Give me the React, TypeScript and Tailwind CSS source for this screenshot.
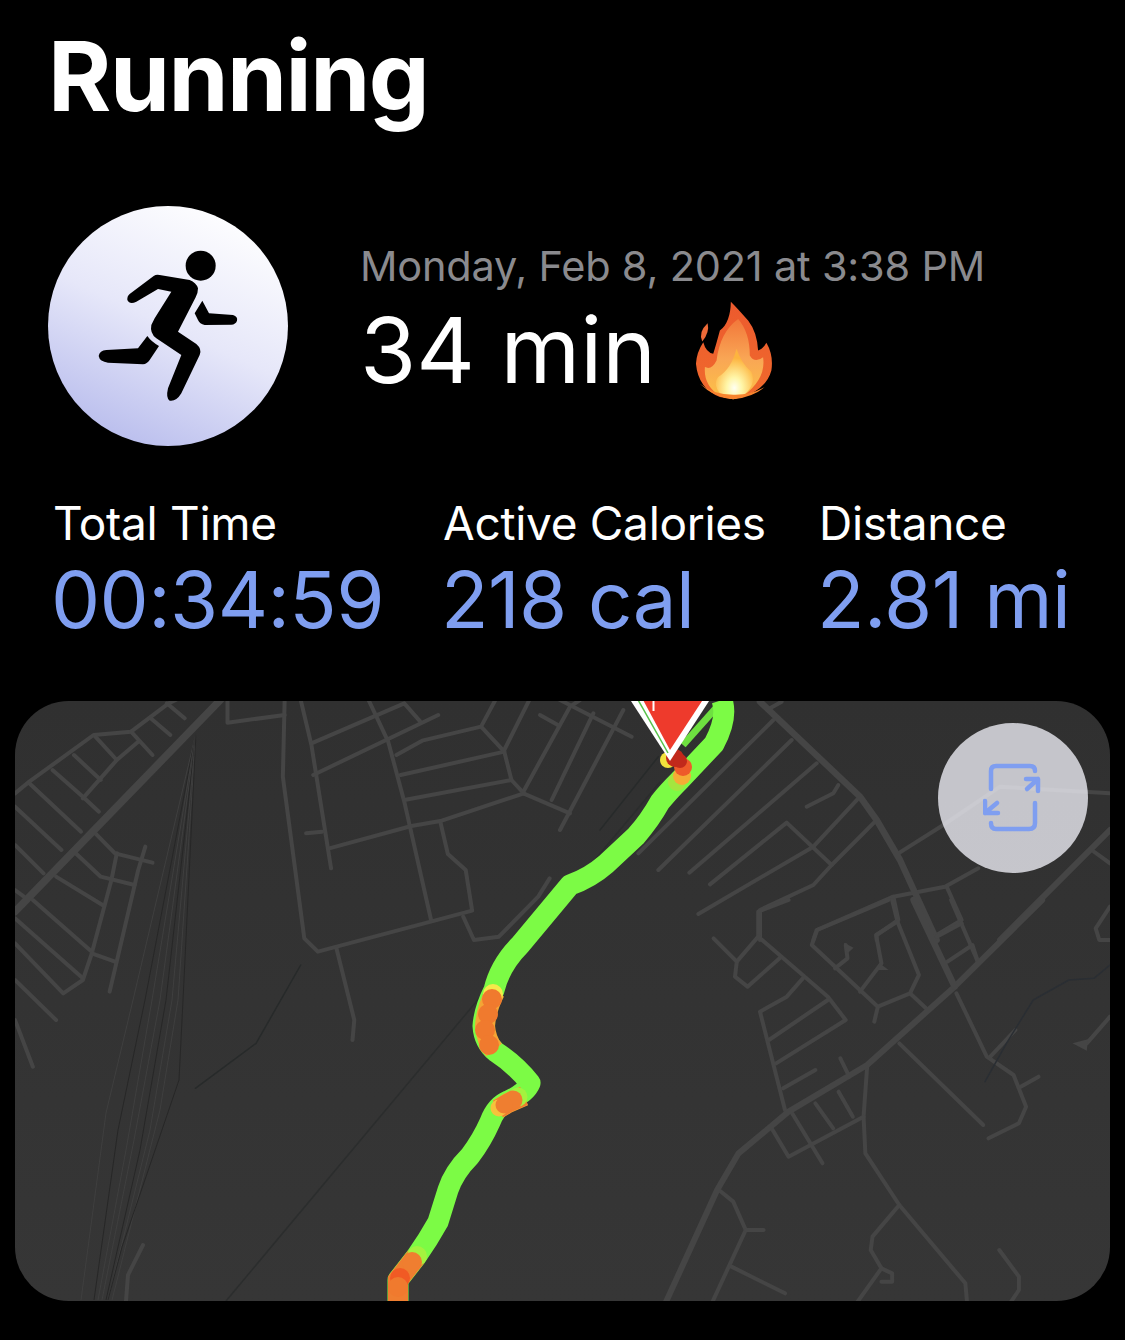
const FONT = "font-['Inter','Liberation_Sans',sans-serif]";

// road polylines, in the coordinates of the map crops
const westThin = [
  "0,280 40,245 220,105 325,95 430,10 450,0",
  "325,95 385,165",
  "425,10 475,55",
  "380,55 435,105",
  "225,110 285,180",
  "165,165 240,240",
  "105,210 190,290 235,335",
  "40,250 185,395",
  "0,320 130,450",
  "0,435 80,520",
  "190,295 285,180 345,125",
  "225,400 280,460 385,488",
  "365,440 345,510 265,875",
  "285,460 270,540 215,760 190,840 135,880 0,730",
  "170,460 240,530 335,555",
  "115,530 245,615",
  "50,600 215,755",
  "0,655 190,835",
  "215,760 280,785",
  "0,570 25,590",
  "0,840 115,960 ",
  "595,0 595,68 755,45",
  "755,0 750,230 810,715 848,755 1280,632 1262,510 1212,462 1192,370",
  "800,0 830,135 885,505",
  "815,400 860,395",
  "880,445 1110,378 1195,362 1425,280",
  "830,130 1090,10 1135,65",
  "835,225 1185,45",
  "990,0 1045,125 1090,305 1165,660",
  "1068,165 1140,122 1305,80 1345,0",
  "1080,225 1370,155",
  "1090,300 1390,240",
  "1305,80 1370,155 1390,240 1425,280",
  "1370,150 1440,0",
  "1470,45 1520,75",
  "1255,650 1285,720 1355,710 1465,590 1497,535",
  "900,745 950,960 945,1020 ",
  "0,960 50,1100",
];

// the blocks just left of the pin
const northCentreThin = [
  "270,20 130,275",
  "340,40 215,300",
  "430,30 240,390",
  "240,0 455,110",
  "130,280 270,340",
  "300,0 270,20",
];

const northEastThin = [
  "520,90 115,490",
  "575,150 175,540",
  "650,220 268,548",
  "715,285 700,310 620,350",
  "775,325 640,470 295,672",
  "825,395 695,525 640,585 480,660 480,750",
  "330,583 560,398 695,525",
  "895,490 1030,405 1200,290 1530,310",
  "1135,535 1035,590 880,620 650,720 640,750",
  "880,620 895,690 830,735 830,750",
  "1040,590 1085,690 1010,735",
  "1475,480 1530,520",
  "545,35 510,55",
];

const southEastThin = [
  "930,0 945,65 885,105 900,190 840,275",
  "920,0 720,90 705,135 890,320 980,280 1005,225 945,65",
  "800,135 805,175 770,205",
  "880,365 890,320",
  "980,280 1030,330",
  "1095,0 1170,185",
  "1055,110 1125,70",
  "1085,185 1155,135 1170,185",
  "640,0 555,35 555,110 495,185 490,230 525,260 615,175",
  "555,110 750,290 800,360 605,490",
  "430,115 495,185",
  "680,235 635,290 560,335 630,630",
  "750,300 585,420",
  "715,510 625,565",
  "785,475 810,530",
  "590,680 640,770 850,650 860,500",
  "650,640 735,790",
  "715,610 765,685",
  "780,575 820,650",
  "850,650 855,760 950,915 1135,1150 1140,1210",
  "950,915 875,1010 870,1050 900,1105 830,1210",
  "900,1105 930,1120 930,1145 900,1145",
  "445,870 485,905 520,990 425,1210",
  "520,990 570,990",
  "480,1100 630,1180",
  "950,430 1185,675",
  "1110,280 1195,470 1270,525 1305,620 1285,670 1200,715",
  "1205,470 1275,390",
  "1290,560 1340,530",
  "1230,1050 1285,1130 1285,1170 1260,1210",
  "1540,350 1475,430",
  "1540,20 1500,85 1510,120 1540,120",
];

const railLines = [
  "196,733 133,1000 106,1113 81,1300",
  "196,733 145,1000 118,1130 94,1300",
  "196,733 152,1000 126,1150 98,1300",
  "196,733 160,1000 134,1140 102,1300",
  "196,733 166,1000 140,1150 106,1300",
  "196,733 172,1000 150,1130 108,1300",
  "196,733 178,1000 160,1110 112,1300",
  "196,733 183,1000 179,1080 122,1247 108,1300",
];

function Road({ points, width, color = "#454545" }: { points: string; width: number; color?: string }) {
  return (
    <polyline
      points={points}
      fill="none"
      stroke={color}
      strokeWidth={width}
      strokeLinecap="round"
      strokeLinejoin="round"
      vectorEffect="non-scaling-stroke"
    />
  );
}

// orange stretches, drawn over the green with the same width
const routeBands = [
  "M495 992 Q486 1010 485 1026 Q486 1040 494 1050",
  "M524 1096 L508 1103 L498 1109",
  "M416 1257 L398 1280 L398 1301",
];

const routeDots: [number, number, string, number][] = [
  [493, 994, "#f5e94a", 10],
  [492, 999, "#f07a2e", 10],
  [488, 1014, "#f07a2e", 10],
  [485, 1030, "#f07a2e", 10],
  [489, 1045, "#f07a2e", 10],
  [518, 1097, "#a4f23f", 9.5],
  [513, 1100, "#ef7e30", 9.5],
  [499, 1108, "#f6c23c", 8.5],
  [504, 1105, "#ef7e30", 8.5],
  [417, 1256, "#a4f23f", 10],
  [412, 1262, "#ef7e30", 10],
  [400, 1278, "#f15a24", 10],
  [398, 1287, "#f07a2e", 10],
];

function MapDrawing() {
  return (
    <svg viewBox="15 701 1095 600" className="block w-full h-full">
      <g transform="translate(15 700) scale(0.35714 0.33333)">
        {westThin.map((p) => (
          <Road key={p} points={p} width={4} />
        ))}
        <Road points="575,0 0,635" width={7.5} />
        <Road points="800,795 675,1030 505,1165" width={1.5} color="#272a2a" />
      </g>
      <g transform="translate(480 700) scale(0.33333)">
        {northCentreThin.map((p) => (
          <Road key={p} points={p} width={4} />
        ))}
        <Road points="535,170 360,390" width={1.5} color="#272a2a" />
      </g>
      <g transform="translate(600 690) scale(0.33333)">
        {northEastThin.map((p) => (
          <Road key={p} points={p} width={4} />
        ))}
        <Road points="480,35 780,320 830,390 900,510 1010,750" width={6.5} />
        <Road points="1530,420 1200,750" width={6} />
      </g>
      <g transform="translate(560 900) scale(0.35714 0.33333)">
        {southEastThin.map((p) => (
          <Road key={p} points={p} width={4} />
        ))}
        <Road points="1350,0 1105,260 860,495 640,635 500,760 440,870 295,1210" width={6} />
        <Road points="990,0 1105,260" width={6.5} />
        <Road points="1190,545 1250,430 1325,300 1425,240 1495,235 1540,195" width={1.5} color="#2a2e33" />
        <polygon points="795,128 822,143 803,162" fill="#454545" />
        <polygon points="895,190 920,210 890,210" fill="#454545" />
        <polygon points="1435,430 1478,418 1475,452" fill="#454545" />
      </g>
      {railLines.map((p, i) => (
        <polyline key={p} points={p} fill="none" strokeWidth="1" stroke={i % 3 === 1 ? "#272727" : "#3f3f3f"} />
      ))}
      <polyline points="143,1245 128,1275 126,1301" fill="none" stroke="#454545" strokeWidth="4" strokeLinecap="round" />
      <polyline points="660,782 226,1301" fill="none" stroke="#2b2d2d" strokeWidth="1.5" />

      {/* route */}
      <polyline points="716,708 683,745" fill="none" stroke="#6ee040" strokeWidth="7" />
      <path
        d="M722 700 Q728 718 714 744 L680 780 Q668 792 660 802 Q650 820 636 836 L606 864 Q590 878 570 885 L520 945 Q500 965 494 990 Q484 1010 483 1026 Q484 1042 496 1052 Q516 1065 530 1083 Q526 1093 508 1101 Q496 1106 490 1122 Q482 1140 470 1156 Q454 1172 448 1190 L438 1222 Q428 1240 416 1257 L398 1280 L398 1301"
        fill="none"
        stroke="#7cfb45"
        strokeWidth="21"
        strokeLinejoin="round"
      />
      {routeBands.map((d) => (
        <path key={d} d={d} fill="none" stroke="#f4a535" strokeWidth="20" strokeLinejoin="round" />
      ))}
      <path d="M524 1096 L508 1103 L498 1109" fill="none" stroke="#ef7e30" strokeWidth="19" />
      <path d="M416 1257 L398 1280 L398 1301" fill="none" stroke="#ef7e30" strokeWidth="20" />
      {routeDots.map(([x, y, c, r]) => (
        <circle key={`${x}-${y}`} cx={x} cy={y} r={r} fill={c} />
      ))}

      {/* start dots and pin */}
      <circle cx="677" cy="782" r="9" fill="#a4e63f" />
      <circle cx="682" cy="776" r="9" fill="#f5ac35" />
      <circle cx="683" cy="767" r="9" fill="#ee5a2a" />
      <circle cx="668" cy="760" r="8" fill="#f2e23c" />
      <circle cx="675" cy="758" r="9" fill="#c1291b" />
      <circle cx="680" cy="761" r="7" fill="#c1291b" />
      <polygon points="629,698 711,698 670,761" fill="#ffffff" />
      <polygon points="635,698 705,698 670,754" fill="#ffffff" />
      <polyline points="637,698 668,753" fill="none" stroke="#57c24a" strokeWidth="1.5" />
      <polygon points="642,698 704,698 670,750" fill="#ee3a2c" />
      <rect x="652.5" y="701" width="2" height="10" fill="#ffffff" />
    </svg>
  );
}

function RunnerBadge() {
  return (
    <div className="w-[240px] h-[240px] rounded-full shrink-0 bg-[linear-gradient(205deg,#ffffff_8%,#e6e7f9_50%,#aeb3ea_100%)]">
      <svg viewBox="55 48 720 720" className="block w-full h-full">
        <circle cx="513" cy="227" r="45" fill="#000" />
        <path
          d="M300 312 L372 258 Q380 252 390 255 L480 270 Q500 278 505 295 Q505 310 498 322 L445 425 L500 462 Q518 478 510 495 L455 610 Q440 635 420 632 Q408 625 415 595 L455 495 L380 445 Q360 430 365 405 L375 385 L425 305 L385 297 L320 335 Q300 345 293 330 Q292 318 300 312 Z"
          fill="#000"
        />
        <path
          d="M518 332 L538 370 L610 375 Q625 380 622 392 Q618 403 605 404 L525 405 Q510 402 505 390 L495 370 Z"
          fill="#000"
        />
        <path
          d="M353 438 Q365 455 388 468 L360 510 Q352 522 340 523 L235 518 Q210 515 207 498 Q210 482 230 480 L325 475 Z"
          fill="#000"
        />
      </svg>
    </div>
  );
}

function Flame() {
  return (
    <svg viewBox="70 30 245 310" className="block w-[82px] h-[103px]">
      <defs>
        <linearGradient id="outer" x1="0" y1="0" x2="0" y2="1">
          <stop offset="0" stopColor="#ec5a2e" />
          <stop offset="1" stopColor="#f06a2c" />
        </linearGradient>
        <linearGradient id="mid" x1="0" y1="0" x2="0" y2="1">
          <stop offset="0" stopColor="#f2773a" />
          <stop offset="0.5" stopColor="#f9a655" />
          <stop offset="1" stopColor="#fcc247" />
        </linearGradient>
        <radialGradient id="core" cx="0.5" cy="0.78" r="0.6">
          <stop offset="0" stopColor="#fffff2" />
          <stop offset="0.35" stopColor="#fff6a8" />
          <stop offset="1" stopColor="#fdb43f" />
        </radialGradient>
      </defs>
      <path d="M113 103 Q120 130 97 158 Q84 130 113 103 Z" fill="#ee6a38" />
      <path
        d="M183 38 Q205 60 235 95 Q262 130 265 185 Q282 178 290 162 Q312 200 305 245 Q290 300 220 325 L190 332 L150 325 Q85 300 78 225 Q80 190 100 160 Q108 190 130 195 Q138 170 150 125 Q182 100 183 38 Z"
        fill="url(#outer)"
      />
      <path
        d="M205 90 Q240 130 240 200 Q255 225 280 205 Q290 270 220 322 L190 330 L150 322 Q100 290 105 235 Q125 245 140 215 Q150 130 205 90 Z"
        fill="url(#mid)"
      />
      <path
        d="M200 180 Q215 225 245 250 Q262 290 215 325 L190 331 L160 325 Q125 290 145 265 Q185 240 200 180 Z"
        fill="url(#core)"
      />
      <path d="M90 285 Q130 325 190 332 Q250 325 285 295 Q240 320 190 318 Q130 318 90 285 Z" fill="#f8842e" />
    </svg>
  );
}

function Stat({ label, value, className }: { label: string; value: string; className: string }) {
  return (
    <div className={className}>
      <div className="text-[46px] leading-[56px] tracking-[-0.3px] text-white whitespace-nowrap">{label}</div>
      <div className="mt-[7px] -ml-[2px] text-[78px] leading-[84px] tracking-[-0.6px] text-[#7f9ef0] whitespace-nowrap">{value}</div>
    </div>
  );
}

export default function App() {
  return (
    <div className={`${FONT} w-[1125px] h-[1340px] overflow-hidden bg-black`}>
      <h1 className="pl-[48px] pt-[21px] text-[96.5px] leading-[110px] font-bold tracking-[-1.5px] text-white">Running</h1>

      <div className="flex items-start mt-[75px] pl-[48px]">
        <RunnerBadge />
        <div className="ml-[73px] pt-[35px]">
          <div className="-ml-[1px] text-[41.5px] leading-[50px] tracking-[-0.2px] text-[#8a8a8e] whitespace-nowrap">
            Monday, Feb 8, 2021 at 3:38 PM
          </div>
          <div className="flex items-center mt-[7px]">
            <span className="text-[91px] leading-[104px] -ml-[1px] text-white">34 min</span>
            <span className="ml-[37px]">
              <Flame />
            </span>
          </div>
        </div>
      </div>

      <div className="flex pl-[53px] mt-[49px]">
        <Stat label="Total Time" value="00:34:59" className="w-[390px]" />
        <Stat label="Active Calories" value="218 cal" className="w-[376px]" />
        <Stat label="Distance" value="2.81 mi" className="w-[280px]" />
      </div>

      <div className="relative mt-[59px] ml-[15px] w-[1095px] h-[600px] rounded-[54px] overflow-hidden bg-[linear-gradient(180deg,#303030,#363636)]">
        <MapDrawing />
        <div className="absolute top-[22px] right-[22px] w-[150px] h-[150px] rounded-full bg-[#ebebf2]/80 flex items-center justify-center">
          <svg viewBox="0 0 60 70" className="w-[60px] h-[70px]" fill="none" stroke="#7f9ef0" strokeWidth="4.5" strokeLinecap="round" strokeLinejoin="round">
            <path d="M8 26 V8 Q8 3 13 3 H47 Q52 3 52 8" />
            <path d="M52 40 V60 Q52 66 46 66 H13 Q8 66 8 60" />
            <path d="M43 16 H55 V28 M55 16 L44 26" />
            <path d="M2 38 V50 H15 M2 50 L14 40" />
          </svg>
        </div>
      </div>
    </div>
  );
}
